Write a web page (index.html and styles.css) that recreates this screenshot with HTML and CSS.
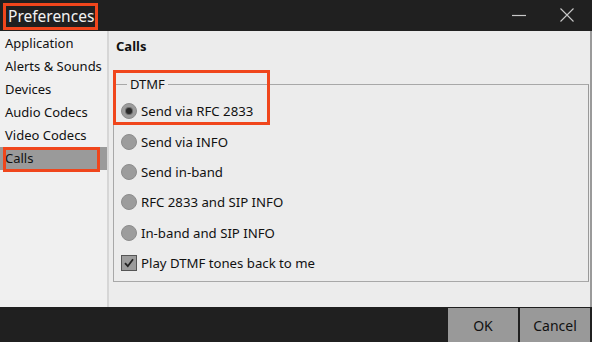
FILE: index.html
```html
<!DOCTYPE html>
<html lang="en">
<head>
  <meta charset="UTF-8">
  <title>Preferences</title>
  <link rel="stylesheet" href="styles.css">
</head>
<body>
  <div class="window">
    <!-- Title bar -->
    <div class="titlebar">
      <span class="title">Preferences</span>
      <div class="mark mark-title"></div>
      <div class="controls">
        <svg class="ctl" width="16" height="16" viewBox="0 0 16 16"><path d="M1 8.5h14" stroke="#c8c8c8" stroke-width="1.2"/></svg>
        <svg class="ctl" width="16" height="16" viewBox="0 0 16 16"><path d="M1.5 1.5l13 13M14.5 1.5l-13 13" stroke="#c8c8c8" stroke-width="1.1"/></svg>
      </div>
    </div>

    <div class="content">
      <!-- Page list -->
      <ul class="sidebar">
        <li>Application</li>
        <li>Alerts &amp; Sounds</li>
        <li>Devices</li>
        <li>Audio Codecs</li>
        <li>Video Codecs</li>
        <li class="selected">Calls</li>
        <div class="mark mark-calls"></div>
      </ul>

      <div class="panel">
        <div class="heading">Calls</div>
        <fieldset class="group">
          <legend>DTMF</legend>
          <div class="option"><span class="radio checked"></span>Send via RFC 2833</div>
          <div class="option"><span class="radio"></span>Send via INFO</div>
          <div class="option"><span class="radio"></span>Send in-band</div>
          <div class="option"><span class="radio"></span>RFC 2833 and SIP INFO</div>
          <div class="option"><span class="radio"></span>In-band and SIP INFO</div>
          <div class="option">
            <span class="checkbox">
              <svg width="12" height="12" viewBox="0 0 12 12"><path d="M2 6.2l2.8 3L10 2.2" fill="none" stroke="#222" stroke-width="1.8"/></svg>
            </span>Play DTMF tones back to me
          </div>
        </fieldset>
        <div class="mark mark-dtmf"></div>
      </div>
    </div>

    <!-- Dialog buttons -->
    <div class="footer">
      <div class="button">OK</div>
      <div class="button">Cancel</div>
    </div>
  </div>
</body>
</html>
```

FILE: styles.css
```css
body {
  margin: 0;
  background: #202020;
  font-family: "Noto Sans", "Open Sans", sans-serif;
  font-size: 13px;
  color: #111;
}

.window {
  width: 592px;
  height: 342px;
  display: flex;
  flex-direction: column;
}

.mark {
  position: absolute;
  border: 3px solid #f0461c;
  box-sizing: border-box;
  pointer-events: none;
}

.titlebar {
  position: relative;
  height: 31px;
  background: #202020;
  display: flex;
  align-items: center;
  justify-content: space-between;
  padding-left: 8px;
}
.title {
  color: #f2f2f2;
  font-size: 15.5px;
}
.mark-title {
  left: 3px; top: 3px; width: 95px; height: 27px;
}
.controls {
  display: flex;
  gap: 32px;
  padding-right: 17px;
  margin-top: -1px;
}

.content {
  flex: 1;
  display: flex;
  background: #ececec;
  border-right: 2px solid #9a9a9a;
}

.sidebar {
  position: relative;
  list-style: none;
  margin: 0;
  padding: 1px 0 0;
  width: 107px;
  background: #f0f0f0;
  border-right: 2px solid #d6d6d6;
}
.sidebar li {
  height: 23px;
  line-height: 23px;
  padding-left: 5px;
  white-space: nowrap;
}
.sidebar li.selected {
  background: #9a9a9a;
}
.mark-calls {
  left: 3px; top: 116px; width: 97px; height: 25px;
}

.panel {
  position: relative;
  flex: 1;
  padding: 4px 1px 0 4px;
}
.heading {
  font-weight: bold;
  padding-left: 3px;
  height: 22px;
  line-height: 22px;
}

.group {
  margin: 18px 0 0;
  padding: 3px 0 6px 7px;
  border: 1px solid #a8a8a8;
  border-right-color: #999;
  height: 207px;
  box-sizing: border-box;
}
.group legend {
  padding: 0 3px;
  margin-left: 6px;
  line-height: 18px;
}
.option {
  display: flex;
  align-items: center;
  gap: 4px;
  height: 30.4px;
  font-size: 13.2px;
  white-space: nowrap;
}
.radio {
  width: 16px;
  height: 16px;
  box-sizing: border-box;
  border-radius: 50%;
  background: #9c9c9c;
  border: 1px solid #8c8c8c;
  display: flex;
  align-items: center;
  justify-content: center;
}
.radio.checked::after {
  content: "";
  width: 6px;
  height: 6px;
  border-radius: 50%;
  background: #2a2a2a;
  box-shadow: 0 0 0 1px #6a6a6a;
}
.checkbox {
  width: 16px;
  height: 16px;
  box-sizing: border-box;
  background: #9c9c9c;
  border: 1px solid #555;
  display: flex;
  align-items: center;
  justify-content: center;
}
.mark-dtmf {
  left: 4px; top: 39px; width: 157px; height: 55px;
}

.footer {
  height: 35px;
  box-sizing: border-box;
  padding: 1px 2px 0 0;
  display: flex;
  justify-content: flex-end;
  gap: 2px;
}
.button {
  width: 70px;
  background: #999;
  color: #111;
  font-size: 14px;
  display: flex;
  align-items: center;
  justify-content: center;
}
```
